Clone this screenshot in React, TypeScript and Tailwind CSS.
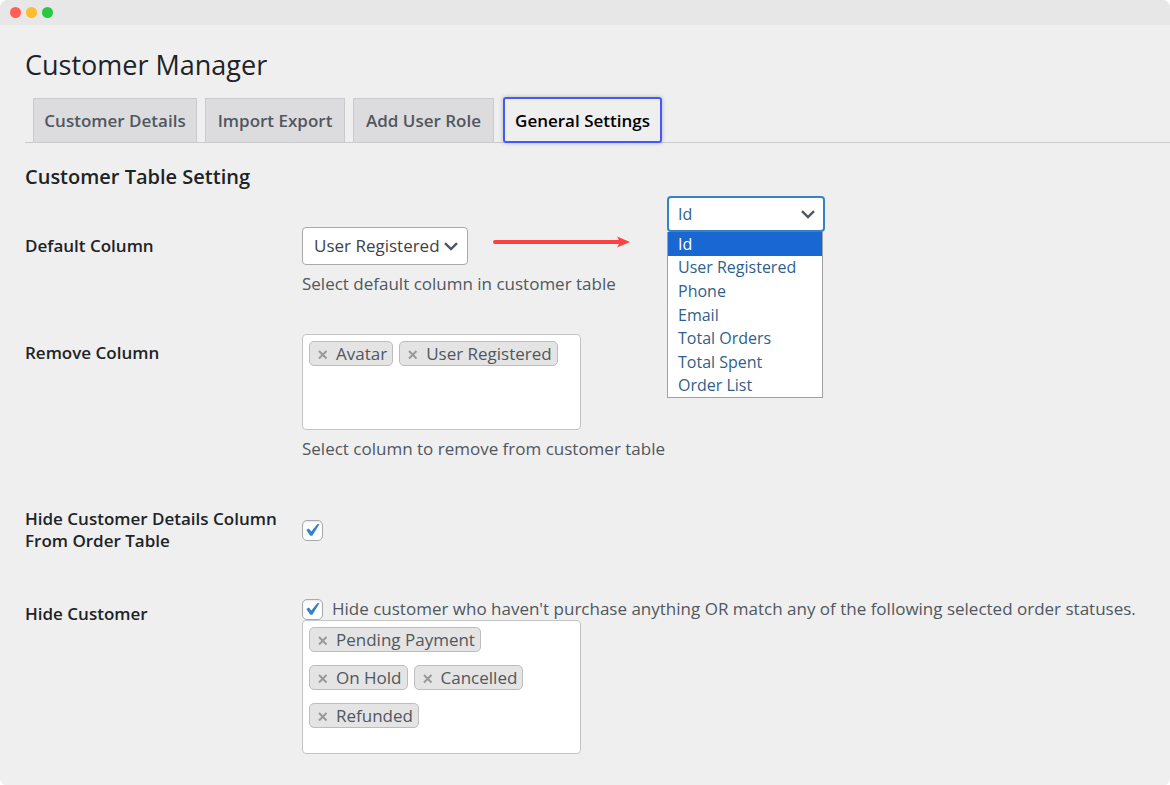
import { useState } from 'react';

const TABS = [
  { label: 'Customer Details', width: 'w-[164px]' },
  { label: 'Import Export', width: 'w-[140px]' },
  { label: 'Add User Role', width: 'w-[141px]' },
  { label: 'General Settings', width: 'w-[159px]' },
];

const COLUMNS = ['Id', 'User Registered', 'Phone', 'Email', 'Total Orders', 'Total Spent', 'Order List'];

export default function App() {
  const [tab, setTab] = useState('General Settings');
  const [column, setColumn] = useState('User Registered');
  const [removed, setRemoved] = useState(['Avatar', 'User Registered']);
  const [statuses, setStatuses] = useState(['Pending Payment', 'On Hold', 'Cancelled', 'Refunded']);

  return (
    <div className="bg-white">
      <div className="min-h-screen overflow-hidden rounded-lg bg-[#efefef] font-['Open_Sans','Noto_Sans',sans-serif] text-[17px] leading-6 text-[#50575e]">
        <header className="flex h-[25px] items-center gap-[5px] bg-[#e7e7e7] px-[10px]">
          <span className="size-[11px] rounded-full bg-[#ff5f57]" />
          <span className="size-[11px] rounded-full bg-[#febc2e]" />
          <span className="size-[11px] rounded-full bg-[#28c840]" />
        </header>

        <main className="pl-[25px]">
          <h1 className="pt-5 text-[27px] leading-10 text-[#1d2327]">Customer Manager</h1>

          <nav className="mt-3 flex items-end gap-2 border-b border-[#c9cacd] pl-2">
            {TABS.map(({ label, width }) => (
              <a
                key={label}
                href="#"
                onClick={(e) => {
                  e.preventDefault();
                  setTab(label);
                }}
                className={`flex items-center justify-center pt-px font-semibold whitespace-nowrap ${width} ${
                  tab === label
                    ? '-mb-px ml-px h-[46px] rounded-[3px] border-2 border-[#4259fb] text-black shadow-[0_0_4px_rgba(0,0,0,0.25)]'
                    : 'h-11 border border-b-0 border-[#c9cacd] bg-[#dcdcde] text-[#50575e]'
                }`}
              >
                {label}
              </a>
            ))}
          </nav>

          <form>
            <div className="flex items-start gap-2">
              <div className="w-[634px] shrink-0">
                <h2 className="mt-5 text-xl leading-7 font-semibold text-[#1d2327]">Customer Table Setting</h2>

                <div className="mt-9 flex">
                  <label htmlFor="default-column" className="mt-[7px] w-[277px] shrink-0 font-semibold text-[#1d2327]">
                    Default Column
                  </label>
                  <div>
                    <div className="flex items-center gap-6">
                      <div className="grid w-[166px] items-center">
                        <select
                          id="default-column"
                          value={column}
                          onChange={(e) => setColumn(e.target.value)}
                          className="col-start-1 row-start-1 h-[38px] appearance-none rounded border border-[#a7a9ac] bg-white pl-[11px] text-[#3c434a]"
                        >
                          {COLUMNS.map((c) => (
                            <option key={c}>{c}</option>
                          ))}
                        </select>
                        <Chevron />
                      </div>
                      <Arrow />
                    </div>
                    <p className="mt-[7px]">Select default column in customer table</p>
                  </div>
                </div>

                <div className="mt-[38px] flex">
                  <span className="mt-[7px] w-[277px] shrink-0 font-semibold text-[#1d2327]">Remove Column</span>
                  <div>
                    <TagBox label="Remove Column" tags={removed} onChange={setRemoved} height="min-h-24" />
                    <p className="mt-[7px] whitespace-nowrap">Select column to remove from customer table</p>
                  </div>
                </div>
              </div>

              <OpenSelect />
            </div>

            <div className="mt-[47px] flex items-center">
              <label
                htmlFor="hide-details"
                className="w-[277px] shrink-0 leading-[22px] font-semibold whitespace-nowrap text-[#1d2327]"
              >
                Hide Customer Details Column
                <br />
                From Order Table
              </label>
              <Tick id="hide-details" />
            </div>

            <div className="mt-[46px] flex pb-8">
              <span className="mt-1 w-[277px] shrink-0 font-semibold text-[#1d2327]">Hide Customer</span>
              <div>
                <div className="flex h-[22px] items-center gap-[9px]">
                  <Tick id="hide-customer" />
                  <label htmlFor="hide-customer" className="leading-[22px] whitespace-nowrap">
                    Hide customer who haven't purchase anything OR match any of the following selected order statuses.
                  </label>
                </div>
                <TagBox label="Order statuses" tags={statuses} onChange={setStatuses} height="min-h-[134px]" />
              </div>
            </div>
          </form>
        </main>
      </div>
    </div>
  );
}

function OpenSelect() {
  const [value, setValue] = useState('Id');

  return (
    <div className="mt-[53px] w-[158px] text-base text-[#2f5f8a]">
      <div className="grid items-center">
        <select
          aria-label="Column"
          value={value}
          onChange={(e) => setValue(e.target.value)}
          className="col-start-1 row-start-1 h-9 appearance-none rounded border-2 border-[#3582c4] bg-white pl-[9px]"
        >
          {COLUMNS.map((c) => (
            <option key={c}>{c}</option>
          ))}
        </select>
        <Chevron />
      </div>
      <ul
        role="listbox"
        aria-label="Columns"
        className="mr-[2px] flex h-[166px] flex-col border border-t-0 border-[#a0a0a0] bg-white"
      >
        {COLUMNS.map((c) => (
          <li
            key={c}
            role="option"
            aria-selected={c === value}
            onClick={() => setValue(c)}
            className={`flex flex-1 items-center pl-[10px] leading-5 ${c === value ? 'bg-[#1967d2] text-white' : ''}`}
          >
            {c}
          </li>
        ))}
      </ul>
    </div>
  );
}

type TagBoxProps = {
  label: string;
  tags: string[];
  onChange: (tags: string[]) => void;
  height: string;
};

function TagBox({ label, tags, onChange, height }: TagBoxProps) {
  return (
    <ul
      aria-label={label}
      className={`flex w-[279px] flex-wrap content-start gap-x-[6px] gap-y-[13px] rounded border border-[#c3c4c7] bg-white p-[6px] ${height}`}
    >
      {tags.map((tag) => (
        <li
          key={tag}
          className="flex h-[25px] items-center gap-2 rounded-[5px] border border-[#bdbdbd] bg-[#e4e4e4] pr-[5px] pl-2 text-[#50575e]"
        >
          <button
            type="button"
            aria-label={`Remove ${tag}`}
            onClick={() => onChange(tags.filter((t) => t !== tag))}
            className="pt-[3px] text-[#999]"
          >
            <svg viewBox="0 0 10 10" className="size-[10px]" stroke="currentColor" strokeWidth="2" fill="none">
              <path d="M1 1l7.500 7.500M8.500 1L1 8.500" />
            </svg>
          </button>
          {tag}
        </li>
      ))}
    </ul>
  );
}

function Tick({ id }: { id: string }) {
  return (
    <span className="grid size-[21px] shrink-0 place-items-center">
      <input
        id={id}
        type="checkbox"
        defaultChecked
        className="peer col-start-1 row-start-1 size-[21px] appearance-none rounded-[5px] border border-[#a7a9ac] bg-white shadow-[inset_0_1px_2px_rgba(0,0,0,0.1)]"
      />
      <svg
        viewBox="0 0 14 14"
        className="pointer-events-none invisible col-start-1 row-start-1 size-[14px] peer-checked:visible"
        fill="#3582c4"
      >
        <path d="M.3 6.900l2.500-1.400 2.500 3.100L11.500 1l2 .3L6.300 12.800H4.300z" />
      </svg>
    </span>
  );
}

function Chevron() {
  return (
    <svg
      viewBox="0 0 14 9"
      className="pointer-events-none col-start-1 row-start-1 mr-[10px] h-[9px] w-[14px] justify-self-end"
      fill="none"
      stroke="#50575e"
      strokeWidth="2.4"
    >
      <path d="M1 1.200l6 5.800 6-5.800" />
    </svg>
  );
}

function Arrow() {
  return (
    <svg viewBox="0 0 138 12" className="mb-2 h-3 w-[138px]" fill="#fb4141">
      <path d="M3 4h124L125 .5 138 6l-13 5.500 2-3.500H3a2 2 0 010-4z" />
    </svg>
  );
}
